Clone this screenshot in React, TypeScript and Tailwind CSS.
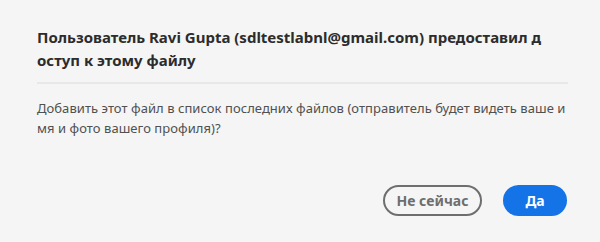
const font = { fontFamily: '"Noto Sans", "Open Sans", Arial, sans-serif' };

export default function App() {
  return (
    <div className="w-[600px] h-[242px] bg-[#f5f5f5] px-[37px] pt-[26px]" style={font}>
      <h2 className="text-[15px] leading-[23px] font-bold text-[#2c2c2c]">
        <span className="block whitespace-nowrap">
          Пользователь Ravi Gupta (sdltestlabnl@gmail.com) предоставил д
        </span>
        <span className="block whitespace-nowrap">оступ к этому файлу</span>
      </h2>
      <div className="mt-[10px] h-[2px] w-[531px] bg-[#e8e8e8]" />
      <p className="mt-[14px] text-[13px] leading-[20px] text-[#505050] tracking-[0.05px]">
        <span className="block whitespace-nowrap">
          Добавить этот файл в список последних файлов (отправитель будет видеть ваше и
        </span>
        <span className="block whitespace-nowrap">мя и фото вашего профиля)?</span>
      </p>
      <div className="mt-[47px] flex justify-end gap-[21px] w-[530px]">
        <button
          type="button"
          className="h-[31px] w-[99px] rounded-full border-2 border-[#6e6e6e] text-[#6e6e6e] text-[14px] font-bold"
        >
          Не сейчас
        </button>
        <button
          type="button"
          className="h-[31px] w-[64px] rounded-full bg-[#1473e6] text-white text-[14px] font-bold"
        >
          Да
        </button>
      </div>
    </div>
  );
}
